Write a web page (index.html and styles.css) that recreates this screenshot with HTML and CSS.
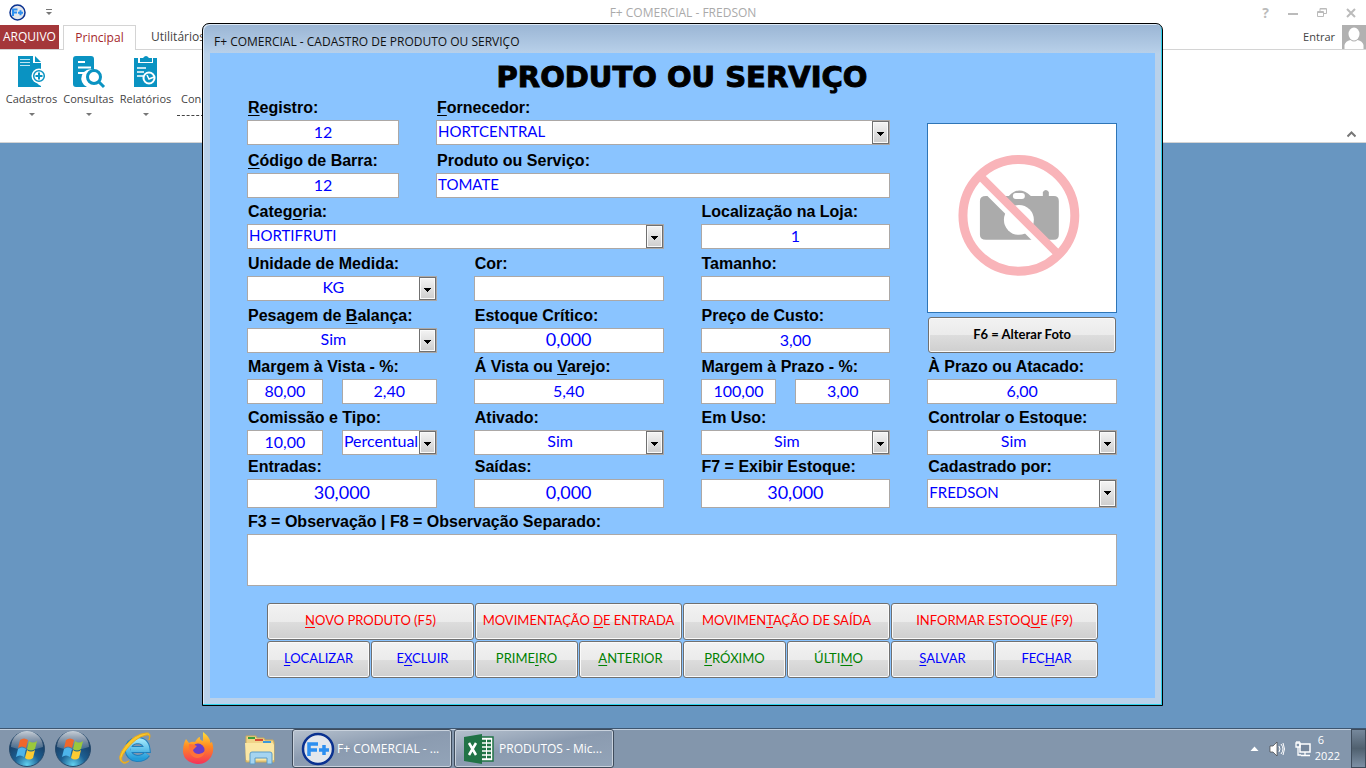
FILE: index.html
```html
<!DOCTYPE html>
<html lang="pt-BR">
<head>
<meta charset="utf-8">
<title>F+ COMERCIAL - FREDSON</title>
<link rel="stylesheet" href="styles.css">
</head>
<body>
<header class="app">
  <div class="app-bar">
    <div class="quick">
      <svg class="logo" viewBox="0 0 34 34" role="img" aria-label="F+"><circle cx="17" cy="17" r="15" fill="#e4e7ec" stroke="#0a3190" stroke-width="3"/><path d="M8 24V11h9M8 17h8M18 17.500h10M23 12.500v10" fill="none" stroke="#2d8ff0" stroke-width="4"/></svg>
      <button class="plain" aria-label="Personalizar"><svg width="6" height="7" viewBox="0 0 6 7"><path d="M0 .5h6" stroke="#777"/><path d="M0 3h6L3 6z" fill="#777"/></svg></button>
    </div>
    <h2 class="app-title">F+ COMERCIAL - FREDSON</h2>
    <div class="win-buttons">
      <button class="plain help" aria-label="Ajuda">?</button>
      <button class="plain" aria-label="Minimizar"><svg width="10" height="12"><path d="M0 7h10" stroke="#bbb" stroke-width="2"/></svg></button>
      <button class="plain" aria-label="Restaurar"><svg width="10" height="12"><path d="M.5 4.500h6v5h-6zM3 4V1.500h6.500v5H7M.5 5.500h6M3 2h6" fill="none" stroke="#bbb"/></svg></button>
      <button class="plain" aria-label="Fechar programa"><svg width="10" height="12"><path d="M1 2l8 8M9 2l-8 8" stroke="#bbb" stroke-width="2"/></svg></button>
    </div>
  </div>
  <nav class="tabs">
    <button class="tab tab-file">ARQUIVO</button>
    <button class="tab tab-active">Principal</button>
    <button class="tab">Utilitários</button>
    <span class="account"><a href="#">Entrar</a>
      <svg width="24" height="25" viewBox="0 0 24 25"><path d="M0 0h24v25H0z" fill="#b1b1b1"/><ellipse cx="12" cy="9" rx="5.500" ry="6.500" fill="#fff"/><path d="M2.500 25v-5q1-4 6-5 3.500 3 7 0 5 1 6 5v5z" fill="#fff"/></svg></span>
  </nav>
  <div class="ribbon">
    <button class="tool"><svg width="32" height="34" viewBox="0 0 32 34"><path d="M2 1h15v7h8v8a8 8 0 0 0 0 15v1H2z" fill="#0a93c2"/><path d="M19 1l6 6h-6z" fill="#0a93c2"/><path d="M4 4.500h10M4 7.500h10M4 10.500h10" stroke="#bfe6f3" stroke-width="1"/><circle cx="23" cy="21" r="7.500" fill="#fff"/><circle cx="23" cy="21" r="5.300" fill="#fff" stroke="#0a93c2" stroke-width="1.500"/><path d="M19.500 21h7M23 17.500v7" stroke="#0a93c2" stroke-width="2"/></svg><span>Cadastros</span><i class="caret"></i></button>
    <button class="tool"><svg width="34" height="34" viewBox="0 0 34 34"><path d="M4 1h15q3 0 3 3v11a9 9 0 0 0-7 17H4q-3 0-3-3V4q0-3 3-3z" fill="#0a93c2"/><path d="M6 7h7M6 12.500h13M6 18h8" stroke="#fff" stroke-width="2"/><circle cx="22" cy="22" r="6.500" fill="#fff" stroke="#0a93c2" stroke-width="3"/><path d="M27 27l5 5" stroke="#0a93c2" stroke-width="3"/></svg><span>Consultas</span><i class="caret"></i></button>
    <button class="tool"><svg width="32" height="34" viewBox="0 0 32 34"><path d="M4 3h23v29H4z" fill="#0a93c2"/><path d="M8 2h15v6H8z" fill="#fff"/><path d="M10 3h3q3-4 6 0h3v4H10z" fill="#0a93c2"/><path d="M7 13h9M7 17h7M7 21h6" stroke="#fff" stroke-width="1.500"/><circle cx="19" cy="23" r="5.500" fill="#0a93c2" stroke="#fff" stroke-width="2"/><path d="M17 20l2 4 5-2" fill="none" stroke="#fff" stroke-width="1.500"/></svg><span>Relatórios</span><i class="caret"></i></button>
    <div class="tool-cut">Con</div>
    <button class="plain collapse" aria-label="Recolher"><svg width="9" height="7"><path d="M.5 5.500l4-4 4 4" fill="none" stroke="#777" stroke-width="2"/></svg></button>
  </div>
</header>

<main class="dialog">
  <div class="dialog-title">F+ COMERCIAL - CADASTRO DE PRODUTO OU SERVIÇO</div>
  <form class="client">
    <h1>PRODUTO OU SERVIÇO</h1>
    <div class="fields">
      <div class="lead">
        <div class="field"><label for="reg"><u>R</u>egistro:</label><input id="reg" value="12"></div>
        <div class="field"><label for="forn"><u>F</u>ornecedor:</label><span class="combo start"><select id="forn"><option>HORTCENTRAL</option></select></span></div>
      </div>
      <div class="lead">
        <div class="field"><label for="cod"><u>C</u>ódigo de Barra:</label><input id="cod" value="12"></div>
        <div class="field"><label for="prod">Produto ou Serviço:</label><input id="prod" class="start" value="TOMATE"></div>
      </div>
      <div class="photo">
        <svg viewBox="0 0 188 188" role="img" aria-label="Sem foto"><path d="M58 72h23q10-11 22 0h12v-4q3-4 6 0v4h5q5 0 5 5v34q0 5-5 5H58q-6 0-6-5V77q0-5 6-5z" fill="#ababab"/><rect x="85" y="69" width="12" height="6" rx="3" fill="#fff"/><circle cx="91" cy="96" r="15" fill="#fff"/><path d="M52 56l82 82" stroke="#fff" stroke-width="12"/><path d="M54 54l77 77" stroke="#f9b4b9" stroke-width="8"/><circle cx="91" cy="91.500" r="56" fill="none" stroke="#f9b4b9" stroke-width="9"/></svg>
        <button type="button" class="btn photo-btn">F6 = Alterar Foto</button>
      </div>
      <div class="field wide"><label for="cat">Categ<u>o</u>ria:</label><span class="combo start"><select id="cat"><option>HORTIFRUTI</option></select></span></div>
      <div class="field"><label for="loc">Localização na Loja:</label><input id="loc" value="1"></div>
      <div class="field"><label for="uni">Unidade de Medida:</label><span class="combo"><select id="uni"><option>KG</option></select></span></div>
      <div class="field"><label for="cor">Cor:</label><input id="cor"></div>
      <div class="field"><label for="tam">Tamanho:</label><input id="tam"></div>
      <div class="field"><label for="pes">Pesagem de <u>B</u>alança:</label><span class="combo"><select id="pes"><option>Sim</option></select></span></div>
      <div class="field"><label for="crit">Estoque Crítico:</label><input id="crit" class="qty" value="0,000"></div>
      <div class="field"><label for="custo">Preço de Custo:</label><input id="custo" value="3,00"></div>
      <div class="field"><label for="mv">Margem à Vista - %:</label><div class="pair"><input id="mv" value="80,00"><input aria-label="Margem à Vista, valor" value="2,40"></div></div>
      <div class="field"><label for="vista">Á Vista ou <u>V</u>arejo:</label><input id="vista" value="5,40"></div>
      <div class="field"><label for="mp">Margem à Prazo - %:</label><div class="pair"><input id="mp" value="100,00"><input aria-label="Margem à Prazo, valor" value="3,00"></div></div>
      <div class="field"><label for="prazo">À Prazo ou Atacado:</label><input id="prazo" value="6,00"></div>
      <div class="field"><label for="com">Comissão e Tipo:</label><div class="pair"><input id="com" value="10,00"><span class="combo"><select aria-label="Tipo de comissão"><option>Percentual</option></select></span></div></div>
      <div class="field"><label for="atv">Ativado:</label><span class="combo"><select id="atv"><option>Sim</option></select></span></div>
      <div class="field"><label for="uso">Em Uso:</label><span class="combo"><select id="uso"><option>Sim</option></select></span></div>
      <div class="field"><label for="ctl">Controlar o Estoque:</label><span class="combo"><select id="ctl"><option>Sim</option></select></span></div>
      <div class="field tall"><label for="ent">Entradas:</label><input id="ent" class="qty" value="30,000"></div>
      <div class="field tall"><label for="sai">Saídas:</label><input id="sai" class="qty" value="0,000"></div>
      <div class="field tall"><label for="est">F7 = Exibir Estoque:</label><input id="est" class="qty" value="30,000"></div>
      <div class="field tall"><label for="por">Cadastrado por:</label><span class="combo start"><select id="por"><option>FREDSON</option></select></span></div>
      <div class="field full"><label for="obs">F3 = Observação | F8 = Observação Separado:</label><textarea id="obs"></textarea></div>
    </div>
    <div class="actions">
      <button type="button" class="btn red"><span><u>N</u>OVO PRODUTO (F5)</span></button>
      <button type="button" class="btn red"><span>MOVIMENTAÇÃO <u>D</u>E ENTRADA</span></button>
      <button type="button" class="btn red"><span>MOVIMEN<u>T</u>AÇÃO DE SAÍDA</span></button>
      <button type="button" class="btn red"><span>INFORMAR ESTOQ<u>U</u>E (F9)</span></button>
      <button type="button" class="btn blue"><span><u>L</u>OCALIZAR</span></button>
      <button type="button" class="btn blue"><span>E<u>X</u>CLUIR</span></button>
      <button type="button" class="btn green"><span>PRIME<u>I</u>RO</span></button>
      <button type="button" class="btn green"><span><u>A</u>NTERIOR</span></button>
      <button type="button" class="btn green"><span><u>P</u>RÓXIMO</span></button>
      <button type="button" class="btn green"><span>ÚLTI<u>M</u>O</span></button>
      <button type="button" class="btn blue"><span><u>S</u>ALVAR</span></button>
      <button type="button" class="btn blue"><span>FEC<u>H</u>AR</span></button>
    </div>
  </form>
</main>

<footer class="taskbar">
  <svg width="0" height="0" class="defs"><defs>
    <radialGradient id="orb" cx=".5" cy=".95" r=".8"><stop offset="0" stop-color="#5fd0ef"/><stop offset=".45" stop-color="#1c5f92"/><stop offset="1" stop-color="#17375c"/></radialGradient>
    <linearGradient id="gloss" x2="0" y2="1"><stop offset="0" stop-color="#fff" stop-opacity=".75"/><stop offset="1" stop-color="#fff" stop-opacity=".15"/></linearGradient>
    <linearGradient id="fox" x2="0" y2="1"><stop offset="0" stop-color="#ffe03a"/><stop offset=".45" stop-color="#ff8a22"/><stop offset="1" stop-color="#f5315b"/></linearGradient>
    <linearGradient id="ie" x2="0" y2="1"><stop offset="0" stop-color="#9be4fb"/><stop offset="1" stop-color="#239bd8"/></linearGradient>
    <symbol id="start" viewBox="0 0 38 38"><circle cx="19" cy="19" r="17.500" fill="url(#orb)" stroke="#264b6d"/><path d="M3 17a16 16 0 0 1 32 0q-16 6-32 0z" fill="url(#gloss)"/><path d="M12 10q4-3 8 0l-2 8q-4-3-8 0z" fill="#f0672b"/><path d="M21 11q4 3 8 0l-2 8q-4 3-8 0z" fill="#9ac83c"/><path d="M10 19q4-3 8 0l-2 8q-4-3-8 0z" fill="#4db4ea"/><path d="M19 20q4 3 8 0l-2 8q-4 3-8 0z" fill="#fccb32"/></symbol>
  </defs></svg>
  <button class="plain orb" aria-label="Iniciar"><svg width="38" height="38"><use href="#start"/></svg></button>
  <button class="plain orb" aria-label="Iniciar 2"><svg width="38" height="38"><use href="#start"/></svg></button>
  <button class="plain launch" aria-label="Internet Explorer"><svg width="34" height="34" viewBox="0 0 34 34"><path d="M28 22q-3 4.500-10 4.500-8-1-9-9 1-8 9-9 9 0 10 9H12" fill="none" stroke="#1f7fbd" stroke-width="7"/><path d="M28 22q-3 4.500-10 4.500-8-1-9-9 1-8 9-9 9 0 10 9H12" fill="none" stroke="url(#ie)" stroke-width="5"/><path d="M4 30q-4-3 3-12Q17 5 27 3q5-1 3 5 3-8-3-7Q16 2 7 13-4 27 4 31q3 1 6-2-4 2-6 1z" fill="#fbc92c" stroke="#e8aa1e"/></svg></button>
  <button class="plain launch" aria-label="Firefox"><svg width="34" height="34" viewBox="0 0 34 34"><path d="M5 7l3 4q3-2 6-1 3-5 5-5-1 3 3 4l0-9q8 6 7 11l2-1q3 8-1 15-6 8-14 7Q3 30 2 20 2 12 5 7z" fill="url(#fox)"/><circle cx="17" cy="18" r="6.500" fill="#6b3fc9"/><path d="M8 12q5 0 8 2l-4 4q1 4 6 4 3 0 6-3-1 7-8 7-9-1-8-14z" fill="#ff7139"/></svg></button>
  <button class="plain launch" aria-label="Explorador de arquivos"><svg width="34" height="34" viewBox="0 0 34 34"><path d="M3 4h10l1 2h7l1 2h8l1 2v20H3z" fill="#f0d488" stroke="#c9a95a"/><path d="M5 5h7v2H5z" fill="#3b9c3b"/><path d="M12 7h8v2h-8z" fill="#d64b35"/><path d="M20 9h8v2h-8z" fill="#3e98d8"/><path d="M2 11h28l1 2v15H3z" fill="#fbe7a5"/><path d="M7 32V22q0-2 2-2h18q2 0 2 2v10h-5v-6H12v6z" fill="#a5d4f0" stroke="#5d9bc6"/></svg></button>
  <button class="task"><svg width="34" height="34" viewBox="0 0 34 34"><circle cx="17" cy="17" r="15" fill="#e4e7ec" stroke="#0a3190" stroke-width="2.500"/><path d="M8 24V12h9M8 18h8M18 18h10M23 13v10" fill="none" stroke="#2d8ff0" stroke-width="3.500"/></svg><span>F+ COMERCIAL - ...</span></button>
  <button class="task"><svg width="34" height="34" viewBox="0 0 34 34"><path d="M17 5h13v24H17z" fill="#fff" stroke="#217346" stroke-width="1.500"/><path d="M19 9h9M19 13h9M19 17h9M19 21h9M19 25h9" stroke="#217346" stroke-width="2.500" stroke-dasharray="4 1"/><path d="M1 5l18-3v30L1 29z" fill="#217346"/><path d="M6 11l7 12M13 11L6 23" stroke="#fff" stroke-width="2.500"/></svg><span>PRODUTOS - Mic...</span></button>
  <div class="tray">
    <svg width="9" height="6"><path d="M.5 5L4.500.5l4 4.500z" fill="#fff"/></svg>
    <svg width="16" height="16" viewBox="0 0 16 16"><path d="M1 5h3l4-4v14l-4-4H1z" fill="#fff" stroke="#444" stroke-width=".7"/><path d="M10 5q2 3 0 6M12 3q4 5 0 10M14 2q3 6 0 12" fill="none" stroke="#fff"/></svg>
    <svg width="17" height="17" viewBox="0 0 17 17"><path d="M5 4h10v8H5z" fill="#76879c" stroke="#fff" stroke-width="1.500"/><path d="M10 12v3M6 15.500h9M3 7v8h3M1 3h4v4H1zM2 1v2M4 1v2" fill="none" stroke="#fff" stroke-width="1.300"/></svg>
  </div>
  <div class="clock"><span>6</span><span>2022</span></div>
  <button class="plain show-desktop" aria-label="Mostrar área de trabalho"></button>
</footer>
</body>
</html>
```

FILE: styles.css
```css
* { box-sizing: border-box; }
body {
  margin: 0;
  min-height: 100vh;
  display: flex;
  flex-direction: column;
  background: #6896c1;
  font: 12px/16px "Open Sans", "Noto Sans", sans-serif;
  color: #444;
}
button, input, select, textarea { font: inherit; margin: 0; }
svg { display: block; flex: none; }
.plain { border: 0; padding: 0; background: none; color: inherit; }
.defs { position: absolute; }

/* Application header */
.app { background: #fff; border-bottom: 1px solid #d4d4d4; }
.app-bar { display: grid; grid-template-columns: 1fr auto 1fr; align-items: center; height: 25px; }
.quick { display: flex; align-items: center; gap: 20px; padding-left: 9px; }
.logo { width: 17px; height: 17px; }
.app-title { margin: 0; font-size: 12px; font-weight: 400; color: #aaa; }
.win-buttons { display: flex; justify-content: flex-end; align-items: center; gap: 19px; padding-right: 10px; color: #bbb; }
.help { font-size: 14px; font-weight: 700; }
.tabs { display: flex; height: 25px; border-bottom: 1px solid #d4d4d4; }
.tab { border: 0; padding: 0 15px; background: none; color: #444; white-space: nowrap; }
.tab-file { width: 59px; padding: 0; margin-right: 4px; background: #a4373a; color: #fff; }
.tab-active { width: 73px; height: 25px; padding: 0; border: 1px solid #d4d4d4; border-bottom: 0; background: #fff; color: #a4262c; }
.account { display: flex; align-items: center; gap: 7px; margin-left: auto; height: 24px; overflow: hidden; font-size: 11px; }
.account a { color: #444; text-decoration: none; }
.ribbon { display: flex; align-items: flex-start; height: 92px; padding: 5px 10px 0 3px; font-size: 11px; }
.tool { width: 57px; padding: 0; border: 0; background: none; color: #444; display: flex; flex-direction: column; align-items: center; }
.tool span { margin-top: 2px; }
.caret { margin-top: 6px; border: 3px solid transparent; border-top-color: #777; border-bottom: 0; }
.tool-cut { width: 27px; margin: 36px 0 0 3px; padding-left: 4px; border-bottom: 1px dashed #444; height: 25px; }
.collapse { margin: 76px 0 0 auto; }

/* Dialog window */
.dialog {
  position: absolute;
  top: 23px;
  left: 202px;
  right: 203px;
  padding: 0 7px 7px;
  border: 1px solid #000;
  border-radius: 7px 7px 0 0;
  background: linear-gradient(#9ab5d4, #b9d1ea 30px, #b9d1ea);
  box-shadow: inset -1px -1px #2fd0ea, inset 1px 1px #dce9f6;
}
.dialog-title { padding: 10px 4px 3px; line-height: 16px; color: #111; }
.client { padding: 7px 38px 20px 37px; background: #8ac4ff; }
h1 {
  margin: 0 0 1px;
  text-align: center;
  font: 700 29px/35px "DejaVu Sans", sans-serif;
  color: #000;
  -webkit-text-stroke: 1px #000;
}
.fields {
  display: grid;
  grid-template-columns: repeat(4, 1fr);
  grid-template-rows: 49px 53px 51px 52px 52px 51px 51px 53px 78px;
  column-gap: 37px;
  align-items: end;
}
.lead { grid-column: 1 / span 3; display: grid; grid-template-columns: 152fr 454fr; gap: 37px; }
.wide { grid-column: span 2; }
.full { grid-column: 1 / -1; }
.field { display: flex; flex-direction: column; gap: 2px; min-width: 0; }
.field label { font: 700 16px/20px "Liberation Sans", Arial, sans-serif; color: #000; white-space: nowrap; padding-left: 1px; }
.field u { text-underline-offset: 2px; text-decoration-thickness: 1px; }
.field input, .combo, .field textarea {
  width: 100%;
  height: 25px;
  border: 1px solid #aca8a6;
  border-radius: 0;
  background: #fff;
  color: #00f;
  font: 16px/20px Lato, sans-serif;
}
.field input { padding: 0 1px 3px; text-align: center; }
.field input.start { text-align: left; font-size: 15px; }
.field input.qty { font-size: 18px; }
.field textarea { display: block; height: 52px; resize: none; }
.field.tall input, .tall .combo { height: 29px; }
.combo { display: grid; grid-template-columns: 1fr 17px; }
.combo select {
  grid-area: 1 / 1 / 2 / 3;
  min-width: 0;
  padding: 0 18px 3px 1px;
  border: 0;
  appearance: none;
  background: none;
  color: #00f;
  text-align-last: center;
}
.combo.start select { text-align-last: left; font-size: 15px; }
.combo::after {
  content: "";
  grid-area: 1 / 2;
  border: 1px solid #707070;
  background:
    linear-gradient(#000, #000) 4px 10px / 7px 1px no-repeat,
    linear-gradient(#000, #000) 5px 11px / 5px 1px no-repeat,
    linear-gradient(#000, #000) 6px 12px / 3px 1px no-repeat,
    linear-gradient(#000, #000) 7px 13px / 1px 1px no-repeat,
    linear-gradient(#f4f4f4, #cdcdcd);
  box-shadow: inset 0 0 0 1px #fafafa;
  pointer-events: none;
}
.pair { display: grid; grid-template-columns: 76fr 95fr; gap: 19px; }
.photo { grid-column: 4; grid-row: 1 / span 5; display: grid; gap: 4px; }
.photo svg { width: 100%; border: 1px solid #2e75b6; background: #fff; }
.btn {
  height: 37px;
  padding: 0 2px 3px;
  border: 1px solid #707070;
  border-radius: 3px;
  background: linear-gradient(#f2f2f2, #ebebeb 50%, #dddddd 50%, #cfcfcf);
  box-shadow: inset 0 0 0 1px #fafafa;
  font-family: Lato, sans-serif;
  font-size: 13px;
  white-space: nowrap;
}
.photo-btn { height: 36px; margin: 0 1px; color: #000; font-weight: 700; }
.btn u { text-underline-offset: 2px; text-decoration-thickness: 1px; }
.actions { display: grid; grid-template-columns: repeat(8, 1fr); gap: 1px; margin: 17px 19px 0 20px; }
.red { grid-column: span 2; color: #f00; }
.blue { color: #00f; }
.green { color: #008000; }

/* Taskbar */
.taskbar {
  display: flex;
  align-items: center;
  height: 40px;
  margin-top: auto;
  border-top: 1px solid #3e5670;
  background: #8396ac;
  box-shadow: inset 0 1px #c3cfdd;
  color: #fff;
}
.orb { margin-left: 8px; }
.launch { margin-left: 28px; }
.orb + .launch { margin-left: 27px; }
.task {
  display: flex;
  align-items: center;
  gap: 2px;
  width: 160px;
  height: 39px;
  margin-left: 2px;
  padding: 0 8px;
  border: 1px solid #3f4c5c;
  border-radius: 3px;
  background: linear-gradient(170deg, #b6c1ce, #8b9bb0 45%, #93a4b8);
  box-shadow: inset 0 0 0 1px #c9d2dd;
  color: #fff;
  white-space: nowrap;
}
.launch + .task { margin-left: 15px; }
.tray { display: flex; align-items: center; gap: 10px; margin: 0 3px 0 auto; }
.clock { display: grid; margin-right: 11px; padding-bottom: 2px; font-size: 11px; }
.clock span:first-child { padding-left: 3px; }
.show-desktop { width: 15px; height: 39px; border: 1px solid #3f4c5c; background: linear-gradient(#76889c, #50606f 50%, #7d90a5); }
```
